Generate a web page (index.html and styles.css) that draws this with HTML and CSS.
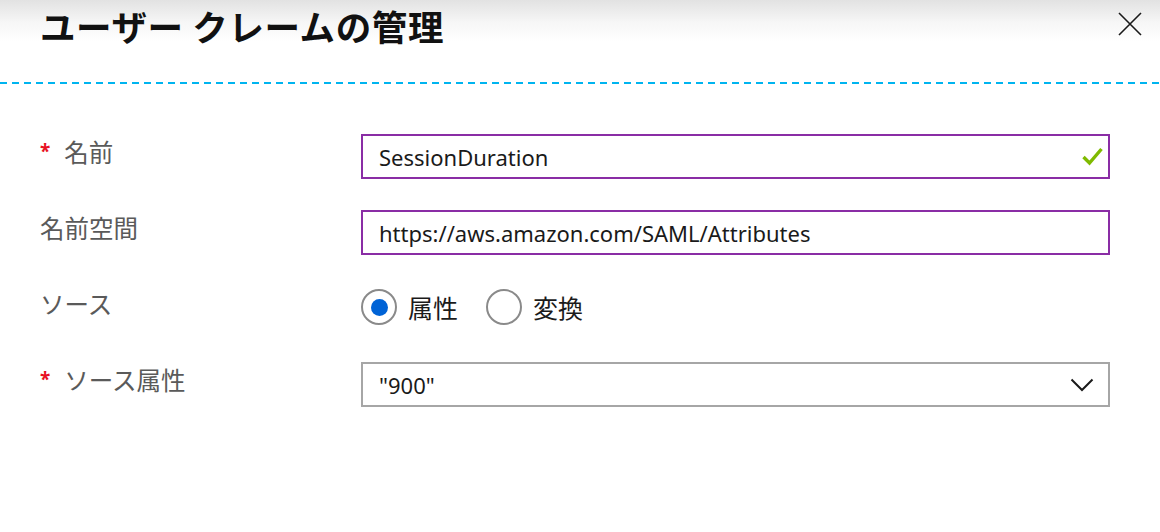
FILE: index.html
```html
<!DOCTYPE html>
<html lang="ja">
<head>
<meta charset="utf-8">
<title>ユーザー クレームの管理</title>
<link rel="stylesheet" href="styles.css">
</head>
<body>
<div class="blade">
  <header class="blade-header">
    <h1 class="blade-title">ユーザー クレームの管理</h1>
    <button class="close-btn" aria-label="閉じる">
      <svg width="24" height="24" viewBox="0 0 24 24"><path d="M1 1 L23 23 M23 1 L1 23" stroke="#1a1a1a" stroke-width="1.6" fill="none"/></svg>
    </button>
  </header>
  <div class="divider"></div>
  <form class="form">
    <div class="row">
      <label class="label"><span class="req">*</span>名前</label>
      <div class="field field-valid">
        <span class="field-text">SessionDuration</span>
        <svg class="check" width="21" height="19" viewBox="0 0 21 19"><path d="M1.5 10 L7.5 16 L19.5 2" stroke="#7fba00" stroke-width="3.4" fill="none"/></svg>
      </div>
    </div>
    <div class="row">
      <label class="label">名前空間</label>
      <div class="field field-focus">
        <span class="field-text">https://aws.amazon.com/SAML/Attributes</span>
      </div>
    </div>
    <div class="row row-radio">
      <label class="label">ソース</label>
      <div class="radios">
        <span class="radio-item"><span class="radio radio-on"></span>属性</span>
        <span class="radio-item"><span class="radio"></span>変換</span>
      </div>
    </div>
    <div class="row">
      <label class="label"><span class="req">*</span>ソース属性</label>
      <div class="field field-select">
        <span class="field-text">"900"</span>
        <svg class="chevron" width="24" height="14" viewBox="0 0 24 14"><path d="M1.5 1.5 L12 12 L22.5 1.5" stroke="#1a1a1a" stroke-width="2" fill="none"/></svg>
      </div>
    </div>
  </form>
</div>
</body>
</html>
```
FILE: styles.css
```css
* { box-sizing: border-box; }
html, body { margin: 0; padding: 0; background: #fff; }
body {
  width: 1160px;
  height: 532px;
  overflow: hidden;
  font-family: "Noto Sans", "Noto Sans CJK JP", sans-serif;
}
.blade-header {
  height: 82px;
  background: linear-gradient(to bottom, #e2e2e2 0px, #f6f6f6 22px, #ffffff 42px);
  display: flex;
  align-items: flex-start;
  justify-content: space-between;
  padding: 0 18px 0 40px;
}
.blade-title {
  margin: 0;
  padding-top: 3px;
  font-family: "Noto Sans CJK JP", sans-serif;
  font-weight: 700;
  font-size: 35.5px;
  line-height: 46px;
  color: #111;
  letter-spacing: 0.6px;
}
.close-btn {
  margin-top: 12px;
  padding: 0;
  border: 0;
  background: transparent;
  width: 24px;
  height: 24px;
  display: block;
}
.close-btn svg { display: block; }
.divider {
  height: 2px;
  background: repeating-linear-gradient(to right, #00b4ef 0 7px, transparent 7px 12px);
}
.form {
  padding: 50px 50px 0 40px;
  display: flex;
  flex-direction: column;
  gap: 31px;
}
.row {
  display: flex;
  align-items: flex-start;
  height: 45px;
}
.label {
  width: 321px;
  flex: none;
  margin-top: 2px;
  font-family: "Noto Sans CJK JP", sans-serif;
  font-size: 24.5px;
  line-height: 32px;
  color: #5a5a5a;
  display: flex;
  align-items: center;
}
.req {
  color: #e81123;
  font-family: "Noto Sans", sans-serif;
  font-weight: 700;
  font-size: 19px;
  margin-right: 14px;
  position: relative;
  top: -1px;
}
.field {
  width: 749px;
  height: 45px;
  border: 2px solid #8a2da5;
  display: flex;
  align-items: center;
  padding: 0 5px 0 16px;
}
.field-text {
  flex: 1;
  font-family: "Noto Sans", "Noto Sans CJK JP", sans-serif;
  font-size: 22px;
  color: #1a1a1a;
  white-space: nowrap;
}
.check { flex: none; }
.field-select {
  border-color: #a6a6a6;
  height: 45px;
}
.chevron { flex: none; margin-right: 9px; }
.radios {
  margin-top: 3px;
  display: flex;
  align-items: center;
  gap: 28px;
  font-family: "Noto Sans CJK JP", sans-serif;
  font-size: 25px;
  color: #1a1a1a;
}
.radio-item {
  display: flex;
  align-items: center;
  gap: 11px;
}
.radio {
  width: 36px;
  height: 36px;
  border: 2px solid #8a8a8a;
  border-radius: 50%;
  display: flex;
  align-items: center;
  justify-content: center;
  background: #fff;
}
.radio-on::after {
  content: "";
  width: 17px;
  height: 17px;
  border-radius: 50%;
  background: #0063d6;
}
```
